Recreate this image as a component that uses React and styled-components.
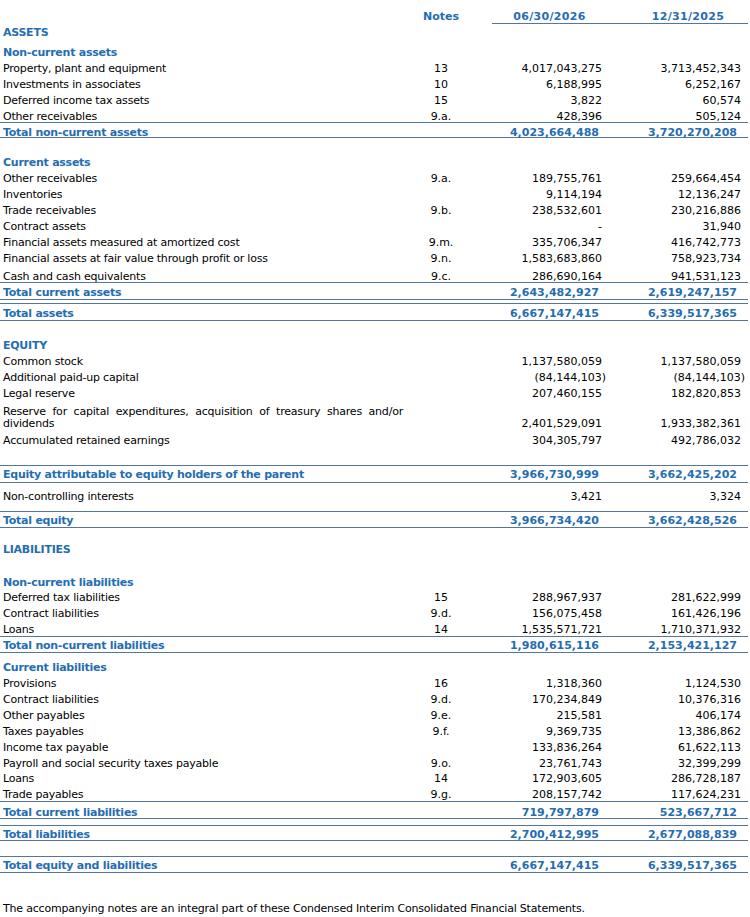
import React from 'react';
import styled, { createGlobalStyle, css } from 'styled-components';

const BLUE = '#256db2';
const RULE = '#55759f';

const GlobalStyle = createGlobalStyle`
  body {
    margin: 0;
    background: #fff;
    font-family: "DejaVu Sans", Verdana, sans-serif;
    font-size: 11px;
    color: #000;
  }
`;

const COLS = '406px 70px 134px 138px';

const Sheet = styled.div`
  width: 748px;
  display: flex;
  flex-direction: column;
`;

const HeaderRow = styled.div`
  display: grid;
  grid-template-columns: ${COLS};
  height: 24px;
`;

const HeadCell = styled.div`
  box-sizing: border-box;
  height: 24px;
  padding: 9px ${(p) => p.$pr || 0}px 0 ${(p) => p.$pl || 0}px;
  margin-left: ${(p) => p.$ml || 0}px;
  line-height: 16px;
  font-weight: bold;
  color: ${BLUE};
  text-align: center;
  white-space: nowrap;
  letter-spacing: ${(p) => (p.$rule ? '0.3px' : '0')};
  ${(p) => p.$rule && css`border-bottom: 1px solid ${RULE};`}
`;

const Row = styled.div`
  display: grid;
  grid-template-columns: ${COLS};
  height: ${(p) => p.$h || 16}px;
  margin-top: ${(p) => p.$mt || 0}px;
  ${(p) => p.$lined && css`
    border-top: 1px solid ${RULE};
    border-bottom: 1px solid ${RULE};
  `}
`;

const Label = styled.div`
  padding: ${(p) => p.$pt}px 3px 0 3px;
  line-height: ${(p) => (p.$wrap ? 12 : 16)}px;
  letter-spacing: ${(p) => (p.$bold ? '-0.25px' : '-0.2px')};
  white-space: ${(p) => (p.$wrap ? 'normal' : 'nowrap')};
  text-align: ${(p) => (p.$wrap ? 'justify' : 'left')};
  ${(p) => p.$bold && css`
    font-weight: bold;
    color: ${BLUE};
  `}
`;

const Note = styled.div`
  padding-top: ${(p) => p.$pt}px;
  line-height: 16px;
  text-align: center;
  white-space: nowrap;
`;

const Num = styled.div`
  padding-top: ${(p) => p.$pt}px;
  line-height: 16px;
  text-align: right;
  white-space: nowrap;
  padding-right: ${(p) => p.$pr}px;
  ${(p) => p.$bold && css`
    font-weight: bold;
    color: ${BLUE};
  `}
`;

const Footer = styled.p`
  margin: 27px 0 0;
  padding: 1px 0 0 3px;
  line-height: 16px;
  letter-spacing: -0.2px;
  white-space: nowrap;
`;

const rows = [
  { k: 'sec', label: 'ASSETS', h: 20 },
  { k: 'sub', label: 'Non-current assets' },
  { label: 'Property, plant and equipment', note: '13', a: '4,017,043,275', b: '3,713,452,343' },
  { label: 'Investments in associates', note: '10', a: '6,188,995', b: '6,252,167' },
  { label: 'Deferred income tax assets', note: '15', a: '3,822', b: '60,574' },
  { label: 'Other receivables', note: '9.a.', a: '428,396', b: '505,124', h: 14 },
  { k: 'tot', label: 'Total non-current assets', a: '4,023,664,488', b: '3,720,270,208', h: 14, pt: 1 },

  { k: 'sub', label: 'Current assets', mt: 16 },
  { label: 'Other receivables', note: '9.a.', a: '189,755,761', b: '259,664,454' },
  { label: 'Inventories', a: '9,114,194', b: '12,136,247' },
  { label: 'Trade receivables', note: '9.b.', a: '238,532,601', b: '230,216,886' },
  { label: 'Contract assets', a: '-', b: '31,940' },
  { label: 'Financial assets measured at amortized cost', note: '9.m.', a: '335,706,347', b: '416,742,773' },
  { label: 'Financial assets at fair value through profit or loss', note: '9.n.', a: '1,583,683,860', b: '758,923,734', h: 18 },
  { label: 'Cash and cash equivalents', note: '9.c.', a: '286,690,164', b: '941,531,123', h: 14 },
  { k: 'tot', label: 'Total current assets', a: '2,643,482,927', b: '2,619,247,157', h: 16, pt: 1 },
  { k: 'tot', label: 'Total assets', a: '6,667,147,415', b: '6,339,517,365', h: 16, pt: 1, mt: 3 },

  { k: 'sec', label: 'EQUITY', mt: 16 },
  { label: 'Common stock', a: '1,137,580,059', b: '1,137,580,059' },
  { label: 'Additional paid-up capital', a: '(84,144,103)', b: '(84,144,103)' },
  { label: 'Legal reserve', a: '207,460,155', b: '182,820,853' },
  {
    label: 'Reserve for capital expenditures, acquisition of treasury shares and/or dividends',
    a: '2,401,529,091', b: '1,933,382,361', h: 31, wrap: true,
  },
  { label: 'Accumulated retained earnings', a: '304,305,797', b: '492,786,032' },
  { k: 'tot', label: 'Equity attributable to equity holders of the parent', a: '3,966,730,999', b: '3,662,425,202', h: 16, mt: 17 },
  { label: 'Non-controlling interests', a: '3,421', b: '3,324', h: 28, pt: 5 },
  { k: 'tot', label: 'Total equity', a: '3,966,734,420', b: '3,662,428,526', h: 15 },

  { k: 'sec', label: 'LIABILITIES', mt: 13 },
  { k: 'sub', label: 'Non-current liabilities', mt: 17, h: 15 },
  { label: 'Deferred tax liabilities', note: '15', a: '288,967,937', b: '281,622,999' },
  { label: 'Contract liabilities', note: '9.d.', a: '156,075,458', b: '161,426,196' },
  { label: 'Loans', note: '14', a: '1,535,571,721', b: '1,710,371,932', h: 15 },
  { k: 'tot', label: 'Total non-current liabilities', a: '1,980,615,116', b: '2,153,421,127', h: 15 },

  { k: 'sub', label: 'Current liabilities', mt: 6 },
  { label: 'Provisions', note: '16', a: '1,318,360', b: '1,124,530' },
  { label: 'Contract liabilities', note: '9.d.', a: '170,234,849', b: '10,376,316' },
  { label: 'Other payables', note: '9.e.', a: '215,581', b: '406,174' },
  { label: 'Taxes payables', note: '9.f.', a: '9,369,735', b: '13,386,862' },
  { label: 'Income tax payable', a: '133,836,264', b: '61,622,113' },
  { label: 'Payroll and social security taxes payable', note: '9.o.', a: '23,761,743', b: '32,399,299', h: 15 },
  { label: 'Loans', note: '14', a: '172,903,605', b: '286,728,187' },
  { label: 'Trade payables', note: '9.g.', a: '208,157,742', b: '117,624,231', h: 15 },
  { k: 'tot', label: 'Total current liabilities', a: '719,797,879', b: '523,667,712', h: 16, pt: 2 },
  { k: 'tot', label: 'Total liabilities', a: '2,700,412,995', b: '2,677,088,839', h: 14, mt: 6 },
  { k: 'tot', label: 'Total equity and liabilities', a: '6,667,147,415', b: '6,339,517,365', h: 15, mt: 15 },
];

// right padding for each value column: plain, negative (parens hang out), bold totals
const pad = (col, value, bold) => {
  const neg = value && value.startsWith('(');
  if (col === 'a') return bold ? 11 : neg ? 4 : 8;
  return bold ? 11 : neg ? 3 : 7;
};

const LineItem = ({ r }) => {
  const bold = r.k === 'sec' || r.k === 'sub' || r.k === 'tot';
  const numBold = r.k === 'tot';
  const pt = (r.pt || 0) + 1;
  const numPt = r.wrap ? 15 : pt;
  return (
    <Row $h={r.h} $mt={r.mt} $lined={r.k === 'tot'}>
      <Label $bold={bold} $pt={r.wrap ? 5 : pt} $wrap={r.wrap}>{r.label}</Label>
      <Note $pt={numPt}>{r.note}</Note>
      <Num $pt={numPt} $bold={numBold} $pr={pad('a', r.a, numBold)}>{r.a}</Num>
      <Num $pt={numPt} $bold={numBold} $pr={pad('b', r.b, numBold)}>{r.b}</Num>
    </Row>
  );
};

const App = () => (
  <>
    <GlobalStyle />
    <Sheet>
      <HeaderRow>
        <div />
        <HeadCell>Notes</HeadCell>
        <HeadCell $rule $ml={16} $pr={3}>06/30/2026</HeadCell>
        <HeadCell $rule $pl={18}>12/31/2025</HeadCell>
      </HeaderRow>
      {rows.map((r, i) => (
        <LineItem key={i} r={r} />
      ))}
      <Footer>
        The accompanying notes are an integral part of these Condensed Interim Consolidated Financial Statements.
      </Footer>
    </Sheet>
  </>
);

export default App;
